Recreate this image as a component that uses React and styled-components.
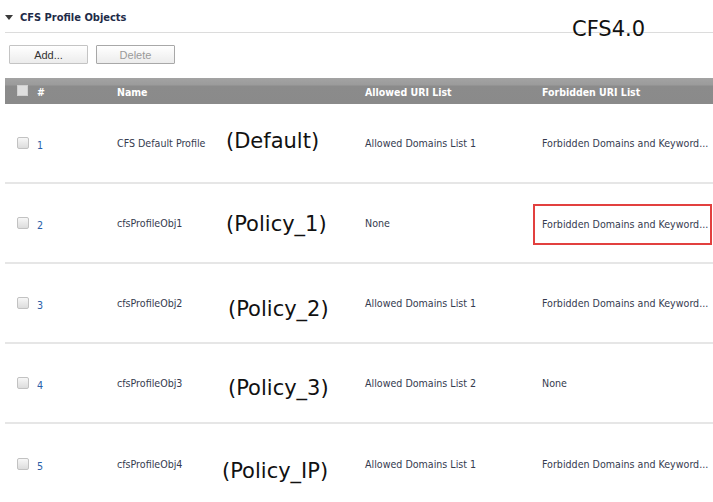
import React from "react";
import styled, { createGlobalStyle } from "styled-components";

const Global = createGlobalStyle`
  html, body { margin: 0; padding: 0; background: #fff; }
  body { font-family: "DejaVu Sans Condensed", "DejaVu Sans", sans-serif; }
  * { box-sizing: border-box; }
`;

const Page = styled.div`
  width: 713px;
  height: 502px;
  overflow: hidden;
  padding-left: 5px;
`;

const SectionHead = styled.div`
  position: relative;
  height: 33px;
  display: flex;
  align-items: center;
  gap: 7px;
  border-bottom: 1px solid #dcdcdc;
  padding-top: 2px;
`;

const Triangle = styled.span`
  width: 0;
  height: 0;
  border-left: 4px solid transparent;
  border-right: 4px solid transparent;
  border-top: 5px solid #3a3a3a;
`;

const Title = styled.span`
  font-family: "DejaVu Sans Condensed", sans-serif;
  font-weight: bold;
  font-size: 11px;
  color: #1e2b48;
`;

const Version = styled.span`
  position: absolute;
  left: 567px;
  top: 19px;
  font-family: "DejaVu Sans", sans-serif;
  font-size: 21px;
  color: #111;
  line-height: 1;
`;

const Toolbar = styled.div`
  display: flex;
  gap: 8px;
  padding: 12px 0 14px 4px;
`;

const Button = styled.button`
  width: 79px;
  height: 19px;
  padding: 0;
  font-family: "Liberation Sans", Arial, sans-serif;
  font-size: 11px;
  color: ${(p) => (p.disabled ? "#9a9a9a" : "#333")};
  background: linear-gradient(#ffffff, #ececec);
  border: 1px solid ${(p) => (p.disabled ? "#a8a8a8" : "#c4c4c4")};
  border-radius: 1px;
`;

const Grid = styled.div`
  display: grid;
  grid-template-columns: 32px 80px 105px 143px 177px 1fr;
`;

const HeadCell = styled.div`
  height: 26px;
  display: flex;
  align-items: center;
  padding-top: 2px;
  padding-left: ${(p) => p.$pad || 0}px;
  background: linear-gradient(#a3a3a3 0, #9b9b9b 7px, #8b8b8b 8px, #8a8a8a 100%);
  color: #fff;
  font-size: 10.5px;
  font-weight: bold;
  white-space: nowrap;
`;

const HeadBox = styled.span`
  width: 11px;
  height: 11px;
  background: #dedede;
  border: 1px solid #cfcfcf;
  margin-top: -3px;
`;

const Cell = styled.div`
  height: 80px;
  display: flex;
  align-items: center;
  padding-left: ${(p) => p.$pad || 0}px;
  border-bottom: ${(p) => (p.$last ? "none" : "2px solid #e6e6e6")};
  font-size: 10.6px;
  color: #353b4f;
  white-space: nowrap;
`;

const Check = styled.span`
  width: 12px;
  height: 12px;
  border: 1px solid #c2c2c2;
  border-radius: 2px;
  background: linear-gradient(#f7f7f7, #dcdcdc);
`;

const Num = styled.span`
  color: #2a5ea8;
  margin-top: 4px;
`;

const Note = styled.span`
  font-family: "DejaVu Sans", sans-serif;
  font-size: 21px;
  color: #111;
  margin-left: ${(p) => p.$dx}px;
  margin-top: ${(p) => p.$dy}px;
`;

const Highlight = styled.span`
  display: flex;
  align-items: center;
  width: 179px;
  height: 41px;
  margin-left: -9px;
  margin-top: 2px;
  padding-left: 7px;
  border: 2px solid #e2403f;
`;

const rows = [
  { n: 1, name: "CFS Default Profile", note: "(Default)", dx: 4, dy: -4, allowed: "Allowed Domains List 1", forbidden: "Forbidden Domains and Keyword..." },
  { n: 2, name: "cfsProfileObj1", note: "(Policy_1)", dx: 4, dy: 2, allowed: "None", forbidden: "Forbidden Domains and Keyword...", hl: true },
  { n: 3, name: "cfsProfileObj2", note: "(Policy_2)", dx: 6, dy: 12, allowed: "Allowed Domains List 1", forbidden: "Forbidden Domains and Keyword..." },
  { n: 4, name: "cfsProfileObj3", note: "(Policy_3)", dx: 6, dy: 10, allowed: "Allowed Domains List 2", forbidden: "None" },
  { n: 5, name: "cfsProfileObj4", note: "(Policy_IP)", dx: 0, dy: 14, allowed: "Allowed Domains List 1", forbidden: "Forbidden Domains and Keyword..." },
];

export default function App() {
  return (
    <Page>
      <Global />
      <SectionHead>
        <Triangle />
        <Title>CFS Profile Objects</Title>
        <Version>CFS4.0</Version>
      </SectionHead>
      <Toolbar>
        <Button>Add...</Button>
        <Button disabled>Delete</Button>
      </Toolbar>
      <Grid>
        <HeadCell $pad={12}><HeadBox /></HeadCell>
        <HeadCell>#</HeadCell>
        <HeadCell>Name</HeadCell>
        <HeadCell />
        <HeadCell>Allowed URI List</HeadCell>
        <HeadCell>Forbidden URI List</HeadCell>
        {rows.map((r, i) => {
          const last = i === rows.length - 1;
          return (
            <React.Fragment key={r.n}>
              <Cell $pad={12} $last={last}><Check /></Cell>
              <Cell $last={last}><Num>{r.n}</Num></Cell>
              <Cell $last={last}>{r.name}</Cell>
              <Cell $last={last}><Note $dx={r.dx} $dy={r.dy}>{r.note}</Note></Cell>
              <Cell $last={last}>{r.allowed}</Cell>
              <Cell $last={last}>
                {r.hl ? <Highlight>{r.forbidden}</Highlight> : r.forbidden}
              </Cell>
            </React.Fragment>
          );
        })}
      </Grid>
    </Page>
  );
}
